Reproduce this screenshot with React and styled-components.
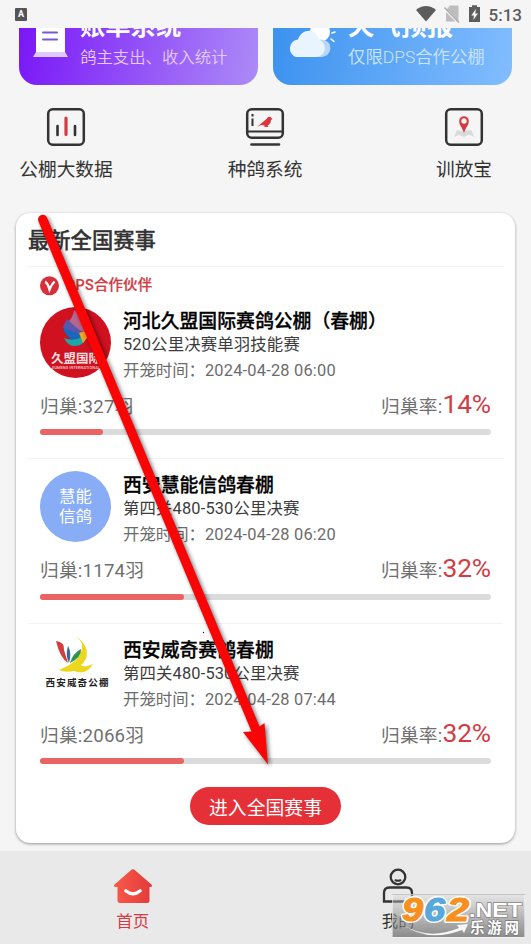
import React from 'react'
import styled, { createGlobalStyle } from 'styled-components'

const races = [
  {
    name: '河北久盟国际赛鸽公棚（春棚）',
    stage: '520公里决赛单羽技能赛',
    time: '2024-04-28 06:00',
    count: 327,
    rate: 14,
    logo: 'jiumeng',
    partner: true
  },
  {
    name: '西安慧能信鸽春棚',
    stage: '第四关480-530公里决赛',
    time: '2024-04-28 06:20',
    count: 1174,
    rate: 32,
    logo: 'huineng'
  },
  {
    name: '西安威奇赛鸽春棚',
    stage: '第四关480-530公里决赛',
    time: '2024-04-28 07:44',
    count: 2066,
    rate: 32,
    logo: 'weiqi'
  }
]

/* Icons */
const StatusIcons = () => (
  <svg width="68" height="20" viewBox="0 0 68 20">
    <path d="M0 5C6 -.4 14 -.4 20 5L10 16.500Z" fill="#5c5c5c" />
    <path d="M34 .500h8.500V16L31 4Z" fill="#bdbdbd" />
    <path d="M30 7v9.500h9.500Z" fill="#bdbdbd" />
    <path d="M28.500 2.500 43 17.500" stroke="#a9a9a9" strokeWidth="1.500" />
    <path d="M56 2V.3h5v1.700h3V17H53V2Z" fill="#5c5c5c" />
    <path d="M60 3.800 55.300 10.500H58L57.300 15 62 8.500H59.200Z" fill="#f5f5f5" />
  </svg>
)

const BillIcon = () => (
  <svg width="36" height="30" viewBox="0 0 36 30">
    <path d="M3 0H32V26H3Z" fill="#fff" />
    <path d="M3 24H32L35 29H0Z" fill="#dccbfb" />
    <path d="M10 4.500H24M10 11.500H24" stroke="#7659d8" strokeWidth="2" strokeLinecap="round" />
  </svg>
)

const WeatherIcon = () => (
  <svg width="50" height="30" viewBox="0 0 50 30">
    <circle cx="33" cy="4" r="10" fill="#fff" />
    <path d="M45 5 48 4M44 11 47 13.500" stroke="#fff" strokeWidth="1.600" strokeLinecap="round" />
    <path d="M22 29V16Q34 8 41 14A9 9 0 0 1 35 29Z" fill="#b9d8fb" />
    <path d="M9 29A9 9 0 0 1 11 11.500C14 1 27 0 31 8C31 10 32 10 33 12A9 9 0 0 1 29 29Z" fill="#eaf4ff" />
  </svg>
)

const DataIcon = () => (
  <svg width="40" height="40" viewBox="0 0 40 40" fill="none" strokeLinecap="round">
    <rect x="2.200" y="2.200" width="35.600" height="35.600" rx="4.500" stroke="#333" strokeWidth="2.500" />
    <path d="M11.500 19V28M29 19V28" stroke="#333" strokeWidth="2.600" />
    <path d="M20 11V27.500" stroke="#d23c46" strokeWidth="3.200" />
  </svg>
)

const PigeonIcon = () => (
  <svg width="40" height="40" viewBox="0 0 40 40" fill="none">
    <rect x="2.200" y="2.200" width="35.600" height="28.600" rx="4.500" stroke="#333" strokeWidth="2.500" />
    <path d="M3 24.500H37" stroke="#333" strokeWidth="1.800" />
    <path d="M6.500 37.500H34" stroke="#333" strokeWidth="2.600" strokeLinecap="round" />
    <path d="M7.500 7V9.500M7.500 11.500V19" stroke="#333" strokeWidth="2" />
    <path d="M12 20 22 11.500C22.500 9.500 25 9 26 10.500L27.500 12 26 13C26 16 24.500 17.500 22.500 18.500L23.500 20H19.500V18.500L16 18Z" fill="#d93840" />
  </svg>
)

const MapIcon = () => (
  <svg width="40" height="40" viewBox="0 0 40 40" fill="none">
    <rect x="2.200" y="2.200" width="35.600" height="35.600" rx="4.500" stroke="#333" strokeWidth="2.500" />
    <path d="M13 23 18 24.500 23 23.500 27 23 30.500 30 25 27.500 20 30 15 28 10 30Z" fill="#dadada" />
    <path d="M20 26C18 20 15.200 18 15.200 14A4.800 4.800 0 0 1 24.800 14C24.800 18 22 20 20 26Z" fill="#d93840" />
    <circle cx="20" cy="14" r="2.700" fill="#f5f5f5" />
  </svg>
)

const HomeIcon = () => (
  <svg width="40" height="36" viewBox="0 0 40 36">
    <defs>
      <linearGradient id="home" x1="0" y1="0" x2="1" y2="0">
        <stop offset="0" stopColor="#fa5a4a" />
        <stop offset="1" stopColor="#e23a3a" />
      </linearGradient>
    </defs>
    <path d="M18.800 1.600Q20 .7 21.200 1.600L38.500 16.500Q39.800 19 37.500 19H36.500V32.500Q36.500 35 34 35H7Q4.500 35 4.500 32.500V19H2.500Q.2 19 1.500 16.500Z" fill="url(#home)" />
    <path d="M12.800 22.800Q20 29 27.200 22.800" stroke="#fff" strokeWidth="3.200" strokeLinecap="round" fill="none" />
  </svg>
)

const UserIcon = () => (
  <svg width="34" height="36" viewBox="0 0 34 36" fill="none" stroke="#333" strokeWidth="2.300" strokeLinecap="round">
    <circle cx="17" cy="9" r="7.300" />
    <path d="M14.500 12.300Q17 13.200 19.500 12.300" strokeWidth="2" />
    <path d="M3 33.500V25Q3 19.500 8.500 19.500H25.500Q31 19.500 31 25V33.500Z" />
  </svg>
)

const PartnerBadge = () => (
  <svg width="20" height="20" viewBox="0 0 20 20">
    <circle cx="9.500" cy="9.700" r="9.500" fill="#d8303a" />
    <path d="M5 6Q7.500 6.500 9.500 13.500Q11.500 8.500 14.500 5.500" stroke="#fff" strokeWidth="2.400" fill="none" />
  </svg>
)

const JiumengLogo = () => (
  <svg width="71" height="71" viewBox="0 0 71 71">
    <circle cx="35.500" cy="35.500" r="35.500" fill="#cf1120" />
    <path d="M34 3C42 9 46 15 44 25L25 18Q33 12 34 3Z" fill="#b9668d" />
    <path d="M27 12Q36 21 45 27L40 33 23 20Z" fill="#5758ad" />
    <path d="M23 20Q30 25 44 28L39 35Q26 33 23 20Z" fill="#1767bd" />
    <path d="M24 31Q37 36 47 26Q46 39 34 39Q28 39 24 31Z" fill="#19a8a5" />
    <path d="M39 26Q48 22 50 27L43 36Z" fill="#f2a324" />
    <text x="11" y="56" fontSize="12.500" fontWeight="700" fill="#f8dede">久盟国际</text>
    <text x="11" y="62" fontSize="4" fontWeight="700" fill="#f0b5b5" textLength="49">JIUMENG INTERNATIONAL</text>
  </svg>
)

const WeiqiLogo = () => (
  <svg width="71" height="71" viewBox="0 0 71 71">
    <path d="M35 0C48 7 51 22 41 29Q43 32 53 28Q46 40 34 35Q25 37 19 34Q31 29 37 23Q43 16 42 8Q40 3 35 0Z" fill="#edd71c" />
    <path d="M16 5Q25 6 24 14L28 27Q20 22 16 5Z" fill="#d53c3c" />
    <path d="M28 10Q32 17 29 27Q25 20 28 10Z" fill="#356a9c" />
    <path d="M41 13Q42 21 30 27Q33 17 41 13Z" fill="#2f9451" />
    <text x="5.500" y="50" fontSize="9.500" fontWeight="700" fill="#222" textLength="63">西安威奇公棚</text>
  </svg>
)

const HuinengLogo = () => (
  <TextLogo>慧能<br />信鸽</TextLogo>
)

const logos = {
  jiumeng: JiumengLogo,
  huineng: HuinengLogo,
  weiqi: WeiqiLogo
}

const Race = ({ race }) => {
  const Logo = logos[race.logo]

  return (
    <RaceItem>
      {race.partner &&
        <Partner><PartnerBadge />DPS合作伙伴</Partner>
      }
      <RaceHead>
        <Logo />
        <RaceInfo>
          <RaceName>{race.name}</RaceName>
          <Stage>{race.stage}</Stage>
          <Time>开笼时间：<Digits>{race.time}</Digits></Time>
        </RaceInfo>
      </RaceHead>
      <Stats>
        <span>归巢:{race.count}羽</span>
        <span>归巢率:<Rate>{race.rate}%</Rate></span>
      </Stats>
      <Track><Bar style={{ width: `${race.rate}%` }} /></Track>
    </RaceItem>
  )
}

const App = () => (
  <Screen>
    <Global />
    <StatusBar>
      <KeyboardBadge>A</KeyboardBadge>
      <StatusRight><StatusIcons />5:13</StatusRight>
    </StatusBar>

    <Banners>
      <Banner $from="#7a17f8" $to="#ac8bf7" $color="#e5c9fd">
        <BannerIcon $width={61}><BillIcon /></BannerIcon>
        <div>
          <BannerTitle $size={25.300}>账单系统</BannerTitle>
          <BannerText>鸽主支出、收入统计</BannerText>
        </div>
      </Banner>
      <Banner $from="#3c92ef" $to="#82bdff" $color="#cbe4ff">
        <BannerIcon $width={75}><WeatherIcon /></BannerIcon>
        <div>
          <BannerTitle $size={26.300}>天气预报</BannerTitle>
          <BannerText $size={17.400}>仅限DPS合作公棚</BannerText>
        </div>
      </Banner>
    </Banners>

    <Shortcuts>
      <Shortcut><DataIcon />公棚大数据</Shortcut>
      <Shortcut><PigeonIcon />种鸽系统</Shortcut>
      <Shortcut><MapIcon />训放宝</Shortcut>
    </Shortcuts>

    <Card>
      <CardTitle>最新全国赛事</CardTitle>
      {races.map(race => <Race key={race.name} race={race} />)}
      <EnterButton>进入全国赛事</EnterButton>
    </Card>

    <TabBar>
      <Tab $active><HomeIcon />首页</Tab>
      <Tab><UserIcon />我的</Tab>
    </TabBar>

    <Arrow width="531" height="944" viewBox="0 0 531 944">
      <path d="M38.500 221.500A4.600 4.600 0 0 1 47 217.500L259.500 726.500 264.500 723 268 764.500 243 732 251.500 731.500Z" fill="#fa0505" />
      <circle cx="203.500" cy="632.500" r="0.700" fill="#222" />
    </Arrow>

    <Watermark>
      <svg width="131" height="42" viewBox="1 1 131 42" fontFamily="Liberation Sans, sans-serif" fontWeight="700">
        <path d="M10 30Q35 47 67 34L65 31 76 30 72 39 70 36Q35 49 10 30Z" fill="#f6f6f6" />
        <g fontSize="33" fontStyle="italic" strokeWidth="1.200" strokeLinejoin="round">
          <g stroke="#fff" strokeWidth="4">
            <text x="10" y="27" textLength="21" lengthAdjust="spacingAndGlyphs">9</text>
            <text x="32" y="27" textLength="21" lengthAdjust="spacingAndGlyphs">6</text>
            <text x="55" y="27" textLength="22" lengthAdjust="spacingAndGlyphs">2</text>
          </g>
          <text x="10" y="27" fill="#f7901e" stroke="#f7901e" textLength="21" lengthAdjust="spacingAndGlyphs">9</text>
          <text x="32" y="27" fill="#58a8dc" stroke="#58a8dc" textLength="21" lengthAdjust="spacingAndGlyphs">6</text>
          <text x="55" y="27" fill="#f7901e" stroke="#f7901e" textLength="22" lengthAdjust="spacingAndGlyphs">2</text>
        </g>
        <text x="77" y="22.500" fontSize="21" fill="#fff" stroke="#888" strokeWidth="1.500" paintOrder="stroke" textLength="53" lengthAdjust="spacingAndGlyphs">.NET</text>
        <text x="78" y="39" fontSize="14.500" fill="#fff" stroke="#777" strokeWidth="1.300" paintOrder="stroke" textLength="49" fontFamily="Noto Sans CJK SC, sans-serif">乐游网</text>
      </svg>
    </Watermark>
  </Screen>
)

export default App

/* Styled */
const Global = createGlobalStyle`
  * {
    box-sizing: border-box;
  }

  body {
    margin: 0;
    background: #f5f5f5;
    font-family: Roboto, "Noto Sans CJK SC", sans-serif;
  }

  svg {
    display: block;
    flex-shrink: 0;
  }
`

const Screen = styled.div`
  position: relative;
  display: flex;
  flex-direction: column;
  width: 531px;
  height: 944px;
  overflow: hidden;
  background: #f5f5f5;
`

const StatusBar = styled.header`
  display: flex;
  justify-content: space-between;
  align-items: center;
  height: 28px;
  padding: 0 9px 0 15px;
`

const KeyboardBadge = styled.span`
  width: 12px;
  height: 13px;
  border-radius: 1px;
  background: #555;
  color: #fff;
  font-size: 9px;
  font-weight: 700;
  line-height: 13px;
  text-align: center;
`

const StatusRight = styled.div`
  display: flex;
  align-items: center;
  gap: 5px;
  height: 28px;
  padding-top: 1px;
  color: #5c5c5c;
  font-size: 17px;
  font-weight: 500;
`

const Banners = styled.div`
  display: flex;
  gap: 15px;
  padding: 0 19px;
`

const Banner = styled.div`
  display: flex;
  width: 239px;
  height: 57px;
  overflow: hidden;
  border-radius: 0 0 18px 18px;
  background: linear-gradient(100deg, ${props => props.$from}, ${props => props.$to});
  color: ${props => props.$color};
  white-space: nowrap;
`

const BannerIcon = styled.div`
  width: ${props => props.$width}px;
  padding-left: 14px;
`

const BannerTitle = styled.div`
  height: 10px;
  margin-top: -2px;
  color: #fff;
  font-size: ${props => props.$size}px;
  font-weight: 700;
  line-height: 1px;
`

const BannerText = styled.div`
  margin-top: 8px;
  font-size: ${props => props.$size || 16.400}px;
  font-weight: 350;
  line-height: 27px;
`

const Shortcuts = styled.nav`
  display: flex;
  justify-content: space-between;
  margin-top: 22px;
  padding: 0 20px 0 19px;
`

const Shortcut = styled.div`
  display: flex;
  flex-direction: column;
  align-items: center;
  gap: 10px;
  width: 94px;
  color: #333;
  font-size: 18.700px;
  line-height: 27px;
  white-space: nowrap;
`

const Card = styled.main`
  display: flex;
  flex-direction: column;
  width: 499px;
  height: 630px;
  margin: 29px 0 0 16px;
  padding: 0 12px;
  border-radius: 14px;
  background: #fff;
  box-shadow: 0 1px 3px rgba(0, 0, 0, 0.4);
`

const CardTitle = styled.h2`
  height: 53px;
  margin: 0;
  color: #333;
  font-size: 21.300px;
  font-weight: 500;
  line-height: 55px;
  -webkit-text-stroke: 0.3px #333;
`

const RaceItem = styled.section`
  padding: 12px 12px 23.100px;
  border-top: 1px solid #f3f3f3;
`

const Partner = styled.div`
  display: flex;
  align-items: center;
  gap: 6px;
  height: 20px;
  margin: -3px 0 11px;
  color: #d23c44;
  font-size: 14.400px;
  font-weight: 500;
  letter-spacing: 0.2px;
  line-height: 18px;
  -webkit-text-stroke: 0.2px #d23c44;
`

const RaceHead = styled.div`
  display: flex;
  gap: 12px;
  height: 71px;
`

const RaceInfo = styled.div`
  white-space: nowrap;
`

const RaceName = styled.h3`
  height: 27px;
  margin: 0;
  color: #000;
  font-size: 18.850px;
  font-weight: 500;
  line-height: 30px;
  -webkit-text-stroke: 0.3px #000;
`

const Stage = styled.div`
  color: #3c3c3c;
  font-size: 16.400px;
  letter-spacing: 0.15px;
  line-height: 22px;
`

const Time = styled.div`
  margin-top: 3px;
  color: #6c6c6c;
  font-size: 16.400px;
  line-height: 24px;
`

const Digits = styled.span`
  letter-spacing: 0.2px;
`

const TextLogo = styled.div`
  width: 71px;
  height: 71px;
  padding-top: 16px;
  border-radius: 50%;
  background: #88adf6;
  color: #fff;
  font-size: 16.400px;
  line-height: 19.500px;
  text-align: center;
`

const Stats = styled.div`
  display: flex;
  justify-content: space-between;
  align-items: baseline;
  height: 32px;
  margin-top: 13px;
  color: #707070;
  font-size: 18.700px;
  letter-spacing: 0.2px;
  line-height: 33px;
`

const Rate = styled.span`
  color: #d23c44;
  font-size: 26.300px;
  letter-spacing: -0.1px;
  line-height: 1;
`

const Track = styled.div`
  height: 6px;
  margin-top: 6.400px;
  border-radius: 3px;
  background: #dbdbdb;
`

const Bar = styled.div`
  height: 6px;
  border-radius: 3px;
  background: #eb6464;
`

const EnterButton = styled.button`
  align-self: center;
  width: 151px;
  height: 38px;
  padding: 0;
  border: none;
  border-radius: 19px;
  background: #e63037;
  color: #fff;
  font-family: inherit;
  font-size: 18.850px;
`

const TabBar = styled.footer`
  display: flex;
  height: 93px;
  margin-top: 8px;
  background: #e9e9e9;
`

const Tab = styled.div`
  display: flex;
  flex: 1;
  flex-direction: column;
  align-items: center;
  padding-top: 17px;
  gap: 6px;
  color: ${props => props.$active ? "#d23c44" : "#333"};
  font-size: 16.400px;
  line-height: 24px;
`

const Arrow = styled.svg`
  position: absolute;
  left: 0;
  top: 0;
  filter: drop-shadow(2px 2px 2px rgba(0, 0, 0, 0.55));
`

const Watermark = styled.div`
  position: absolute;
  left: 392px;
  top: 894px;
  width: 133px;
  height: 44px;
  border: 1px solid rgba(255, 255, 255, 0.5);
  background: linear-gradient(rgba(220, 220, 220, 0.4), rgba(110, 110, 110, 0.75));
`
